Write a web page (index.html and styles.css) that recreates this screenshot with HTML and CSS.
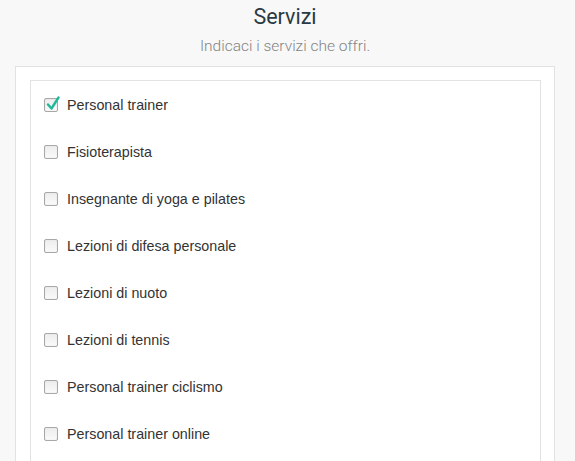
FILE: index.html
```html
<!DOCTYPE html>
<html lang="it">
<head>
    <meta charset="UTF-8">
    <meta name="viewport" content="width=device-width, initial-scale=1.0">
    <title>Servizi</title>
    <link rel="stylesheet" href="styles.css">
</head>
<body>
<div class="header">
    <h1>Servizi</h1>
    <p>Indicaci i servizi che offri.</p>
</div>

<div class="panel">
    <div class="list">
        <label class="item">
            <input type="checkbox" checked>
            <span class="box">
                <svg viewBox="0 0 16 16" width="16" height="16"><path d="M3 8.5 L6.5 12.5 L13.5 1.5" fill="none" stroke="#1fb89a" stroke-width="2.4" stroke-linecap="round" stroke-linejoin="round"/></svg>
            </span>
            Personal trainer
        </label>
        <label class="item"><input type="checkbox"><span class="box"></span>Fisioterapista</label>
        <label class="item"><input type="checkbox"><span class="box"></span>Insegnante di yoga e pilates</label>
        <label class="item"><input type="checkbox"><span class="box"></span>Lezioni di difesa personale</label>
        <label class="item"><input type="checkbox"><span class="box"></span>Lezioni di nuoto</label>
        <label class="item"><input type="checkbox"><span class="box"></span>Lezioni di tennis</label>
        <label class="item"><input type="checkbox"><span class="box"></span>Personal trainer ciclismo</label>
        <label class="item"><input type="checkbox"><span class="box"></span>Personal trainer online</label>
    </div>
</div>
</body>
</html>
```

FILE: styles.css
```css
body {
    margin: 0;
    background-color: #f8f8f8;
    font-family: "Liberation Sans", Arial, sans-serif;
    color: #333;
}
.header {
    text-align: center;
    padding-right: 5px;
}
.header h1 {
    margin: 0;
    padding-top: 3px;
    font-family: Roboto, sans-serif;
    font-weight: 400;
    font-size: 21.5px;
    line-height: 28px;
    color: #2a3a44;
}
.header p {
    margin: 6px 0 0;
    font-family: Roboto, sans-serif;
    font-weight: 300;
    font-size: 15.5px;
    line-height: 19px;
    color: #848484;
}
.panel {
    margin: 10px 20px 0 15px;
    padding: 13px 13px 0 14px;
    background-color: #fff;
    border: 1px solid #e2e2e2;
    border-bottom: none;
}
.list {
    border: 1px solid #e2e2e2;
    border-bottom: none;
    padding-left: 13px;
    padding-bottom: 20px;
}
.item {
    display: flex;
    align-items: center;
    height: 47px;
    font-size: 14.3px;
    color: #333;
    cursor: pointer;
}
.item input {
    display: none;
}
.box {
    position: relative;
    width: 12px;
    height: 12px;
    margin-right: 9px;
    border: 1px solid #a8a8a8;
    border-radius: 2px;
    background: linear-gradient(#ededed, #fafafa);
    box-shadow: inset 0 0 1px #d0d0d0;
}
/* spunta verde */
.box svg {
    position: absolute;
    left: 0;
    top: -3px;
}
```
